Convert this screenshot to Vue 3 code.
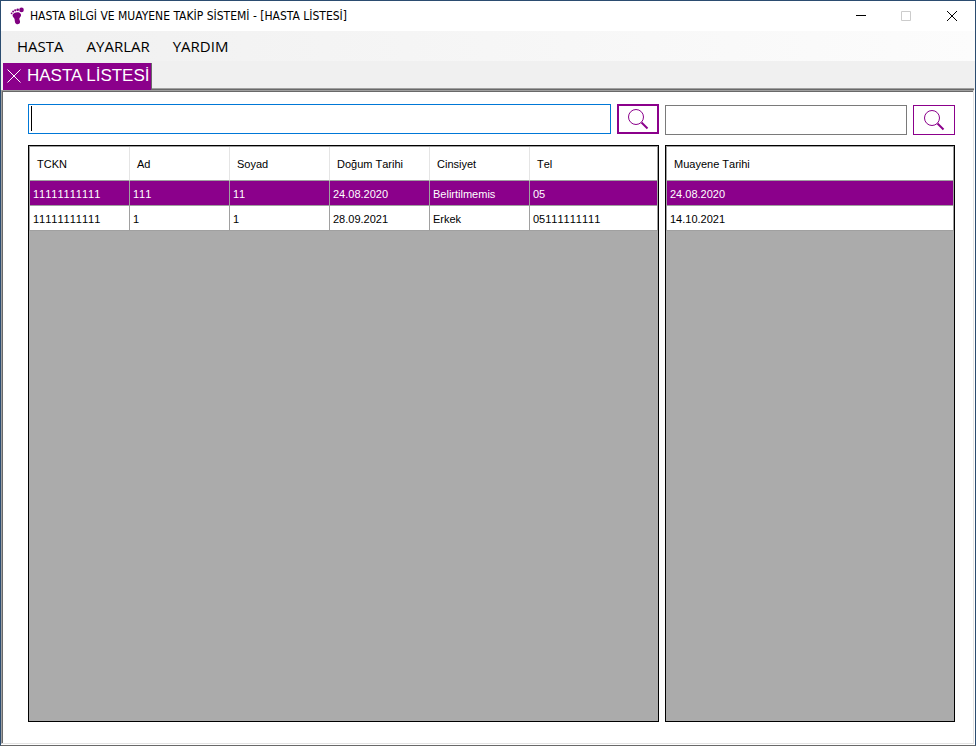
<script setup>
import { ref, onMounted } from 'vue'

const menus = ['HASTA', 'AYARLAR', 'YARDIM']
const patientColumns = ['TCKN', 'Ad', 'Soyad', 'Doğum Tarihi', 'Cinsiyet', 'Tel']
const patients = [
  ['11111111111', '111', '11', '24.08.2020', 'Belirtilmemis', '05'],
  ['11111111111', '1', '1', '28.09.2021', 'Erkek', '05111111111'],
]
const exams = ['24.08.2020', '14.10.2021']
const selectedPatient = ref(0)
const selectedExam = ref(0)
const patientQuery = ref('')
const examQuery = ref('')
const patientInput = ref(null)

onMounted(() => patientInput.value.focus())
</script>

<template>
  <div class="window">
    <header class="titlebar">
      <svg class="logo" viewBox="0 0 16 18" aria-hidden="true">
        <path d="M2.800 7.200C4.500 5 8.800 4.400 10.400 6.400C12 8.600 10.200 9.900 9.400 11.300C9 12.600 10.500 13.800 10 15.500C9.300 17.800 5.800 17.700 5.100 15.400C4.500 13.400 5 12.300 4 11C3.100 9.900 2 8.600 2.800 7.200Z" />
        <ellipse cx="11.500" cy="2.900" rx="2.300" ry="2.300" />
        <circle cx="7.700" cy="2.700" r="1.300" />
        <circle cx="5.200" cy="3.300" r="1.100" />
        <circle cx="3.100" cy="4.500" r="1" />
        <circle cx="1.600" cy="6.300" r="0.900" />
      </svg>
      <h1 class="title">HASTA BİLGİ VE MUAYENE TAKİP SİSTEMİ - [HASTA LİSTESİ]</h1>
      <div class="controls">
        <button type="button" class="control" aria-label="Simge durumuna küçült">
          <svg viewBox="0 0 11 11"><path d="M1 4.500H11" /></svg>
        </button>
        <button type="button" class="control" aria-label="Ekranı kapla" disabled>
          <svg viewBox="0 0 11 11"><path d="M.5.5H9.500V9.500H.5Z" /></svg>
        </button>
        <button type="button" class="control" aria-label="Kapat">
          <svg viewBox="0 0 11 11"><path d="M0 0L10 10M10 0L0 10" /></svg>
        </button>
      </div>
    </header>

    <nav class="menubar">
      <button v-for="menu in menus" :key="menu" type="button" class="menu">{{ menu }}</button>
    </nav>

    <div class="tabstrip">
      <div class="tab">
        <button type="button" class="tab-close" aria-label="Sekmeyi kapat">
          <svg viewBox="0 0 14 14"><path d="M.5.5L13.500 13.500M13.500.5L.5 13.500" /></svg>
        </button>
        <span>HASTA LİSTESİ</span>
      </div>
      <div class="strip-rest"></div>
    </div>

    <main class="client">
      <section class="pane patients">
        <form class="search" @submit.prevent>
          <input ref="patientInput" v-model="patientQuery" class="field focused" :class="{ empty: !patientQuery }" type="text" aria-label="Hasta ara" />
          <button type="submit" class="find primary" aria-label="Hasta ara">
            <svg viewBox="0 0 22 22"><circle cx="9" cy="9" r="7.500" /><path d="M14.500 14.500L20.500 20.500" /></svg>
          </button>
        </form>
        <div class="grid">
          <table>
            <thead>
              <tr><th v-for="c in patientColumns" :key="c" scope="col">{{ c }}</th></tr>
            </thead>
            <tbody>
              <tr v-for="(row, i) in patients" :key="i" :class="{ selected: i === selectedPatient }" @click="selectedPatient = i">
                <td v-for="(cell, j) in row" :key="j">{{ cell }}</td>
              </tr>
            </tbody>
          </table>
        </div>
      </section>

      <section class="pane exams">
        <form class="search second" @submit.prevent>
          <input v-model="examQuery" class="field" type="text" aria-label="Muayene ara" />
          <button type="submit" class="find" aria-label="Muayene ara">
            <svg viewBox="0 0 22 22"><circle cx="9" cy="9" r="7.500" /><path d="M14.500 14.500L20.500 20.500" /></svg>
          </button>
        </form>
        <div class="grid">
          <table>
            <thead>
              <tr><th scope="col">Muayene Tarihi</th></tr>
            </thead>
            <tbody>
              <tr v-for="(date, i) in exams" :key="date" :class="{ selected: i === selectedExam }" @click="selectedExam = i">
                <td>{{ date }}</td>
              </tr>
            </tbody>
          </table>
        </div>
      </section>
    </main>
  </div>
</template>

<style>
body {
  margin: 0;
}
</style>

<style scoped>
* {
  box-sizing: border-box;
}
button {
  border: 0;
  background: none;
  padding: 0;
  margin: 0;
  color: inherit;
  font: inherit;
}
svg {
  display: block;
}
.window {
  display: flex;
  flex-direction: column;
  min-height: 100vh;
  border: 1px solid #2b4c70;
  border-bottom-color: #696969;
  background: #fff;
  color: #000;
  font-family: "Liberation Sans", Arial, sans-serif;
}
.titlebar {
  display: flex;
  align-items: center;
  height: 30px;
  padding-left: 9px;
}
.logo {
  width: 16px;
  height: 18px;
  fill: #800080;
}
.title {
  flex: 1;
  margin: 0 0 0 4px;
  font: 400 12px/16px "DejaVu Sans Condensed", "Segoe UI", sans-serif;
  white-space: nowrap;
}
.controls {
  display: flex;
}
.control {
  display: grid;
  place-items: center;
  width: 46px;
  height: 30px;
}
.control svg {
  width: 11px;
  height: 11px;
  fill: none;
  stroke: #000;
}
.control:disabled svg {
  stroke: #ccc;
}
.menubar {
  display: flex;
  align-items: center;
  gap: 23px;
  height: 30px;
  padding-left: 16px;
  background: linear-gradient(90deg, #f0f0f0, #fcfcfc);
  font: 400 15px/20px "Open Sans", "Segoe UI", sans-serif;
}
.tabstrip {
  display: flex;
  height: 29px;
  padding: 2px 1px 0 2px;
  background: #f0f0f0;
}
.tab {
  display: flex;
  align-items: center;
  gap: 6px;
  padding: 0 1px 2px 4px;
  border-right: 1px solid #696969;
  background: #8b008b;
  color: #fff;
  font-size: 17px;
  line-height: 20px;
  white-space: nowrap;
}
.tab-close svg {
  width: 14px;
  height: 14px;
  fill: none;
  stroke: #fff;
}
.strip-rest {
  flex: 1;
  border-bottom: 1px solid #696969;
  box-shadow: inset 0 -1px #a0a0a0;
}
.client {
  flex: 1;
  display: flex;
  gap: 6px;
  margin: 0 1px 1px 0;
  padding: 13px 18px 21px 26px;
  border: 1px solid #e3e3e3;
  border-top-color: #a0a0a0;
  border-left-color: #a0a0a0;
  box-shadow: inset 1px 1px #696969;
}
.pane {
  display: flex;
  flex-direction: column;
  gap: 11px;
  min-width: 0;
}
.patients {
  flex: 631;
}
.exams {
  flex: 290;
}
.search {
  display: flex;
  gap: 6px;
  height: 30px;
}
.second {
  padding-top: 1px;
  height: 31px;
  margin-bottom: -1px;
}
.field {
  flex: 1;
  min-width: 0;
  border: 1px solid #7a7a7a;
  border-radius: 0;
  padding: 1px 2px;
  outline: 0;
  background: #fff;
  font: 22px/26px "Liberation Sans", Arial, sans-serif;
}
.focused {
  border-color: #0078d7;
}
.empty {
  caret-color: transparent;
  background: linear-gradient(#000, #000) 2px 1px / 1px 25px no-repeat #fff;
}
.find {
  display: grid;
  place-items: center;
  width: 42px;
  border: 1px solid #8b008b;
  background: #fff;
}
.primary {
  border-width: 2px;
}
.find svg {
  width: 22px;
  height: 22px;
  fill: none;
  stroke: #8b008b;
}
.find path {
  stroke-width: 2;
}
.grid {
  flex: 1;
  border: 1px solid #000;
  background: #ababab;
}
table {
  width: 100%;
  border-collapse: separate;
  border-spacing: 0;
  table-layout: fixed;
  border: 1px solid #a0a0a0;
  border-bottom: 0;
  background: #fff;
  font-size: 11px;
  line-height: 14px;
  font-kerning: none;
}
th,
td {
  border-right: 1px solid #a0a0a0;
  border-bottom: 1px solid #a0a0a0;
  text-align: left;
  font-weight: 400;
  white-space: nowrap;
}
th {
  height: 34px;
  padding: 0 7px;
  border-right-color: #e5e5e5;
}
td {
  height: 25px;
  padding: 2px 3px 0;
}
.patients th:not(:last-child) {
  width: 100px;
}
th:last-child,
td:last-child {
  border-right: 0;
}
.selected td {
  background: #8b008b;
  color: #fff;
}
</style>
